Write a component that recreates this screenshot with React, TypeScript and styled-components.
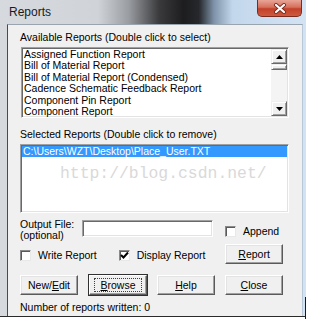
import styled, { createGlobalStyle } from "styled-components";

const Global = createGlobalStyle`
    body {
        margin: 0;
        background: #ffffff;
    }
`

const available = [
    "Assigned Function Report",
    "Bill of Material Report",
    "Bill of Material Report (Condensed)",
    "Cadence Schematic Feedback Report",
    "Component Pin Report",
    "Component Report",
]

const App = () => {
    return (
        <Page>
            <Global />
            <Frame>
                <TitleBar>
                    <Title>Reports</Title>
                    <CloseBox>
                        <svg width="14" height="11" viewBox="0 0 14 11">
                            <path d="M3 2 L11 9 M11 2 L3 9" stroke="#7a2a20" strokeWidth="4" strokeLinecap="round" />
                            <path d="M3 2 L11 9 M11 2 L3 9" stroke="#ffffff" strokeWidth="2.2" strokeLinecap="round" />
                        </svg>
                    </CloseBox>
                </TitleBar>
                <Client>
                    <Label>Available Reports (Double click to select)</Label>
                    <ListBox $height={71} $left={1}>
                        <Items>
                            {available.map((name) => (
                                <Item key={name}>{name}</Item>
                            ))}
                        </Items>
                        <ScrollBar>
                            <ArrowBtn>
                                <svg width="7" height="4" viewBox="0 0 7 4"><path d="M3.5 0 L7 4 L0 4 Z" fill="#000" /></svg>
                            </ArrowBtn>
                            <Thumb />
                            <Track />
                            <ArrowBtn>
                                <svg width="7" height="4" viewBox="0 0 7 4"><path d="M0 0 L7 0 L3.5 4 Z" fill="#000" /></svg>
                            </ArrowBtn>
                        </ScrollBar>
                    </ListBox>
                    <Label $top={10}>Selected Reports (Double click to remove)</Label>
                    <ListBox $height={69}>
                        <Items>
                            <Item $selected>C:\Users\WZT\Desktop\Place_User.TXT</Item>
                        </Items>
                        <Watermark>http://blog.csdn.net/</Watermark>
                    </ListBox>
                    <OutputRow>
                        <OutputLabel>Output File:<br />(optional)</OutputLabel>
                        <TextInput />
                        <Check $left={12}>
                            <Box />
                            <span>Append</span>
                        </Check>
                    </OutputRow>
                    <OptionsRow>
                        <Check $width={99}>
                            <Box />
                            <span>Write Report</span>
                        </Check>
                        <Check $width={107}>
                            <Box>
                                <svg width="9" height="9" viewBox="0 0 9 9">
                                    <path d="M1 4 L3.5 6.5 L8 1.5" stroke="#000" strokeWidth="2" fill="none" />
                                </svg>
                            </Box>
                            <span>Display Report</span>
                        </Check>
                        <Button><u>R</u>eport</Button>
                    </OptionsRow>
                    <ButtonRow>
                        <Button>New/<u>E</u>dit</Button>
                        <Button $default><Focus><u>B</u>rowse</Focus></Button>
                        <Button><u>H</u>elp</Button>
                        <Button><u>C</u>lose</Button>
                    </ButtonRow>
                    <Status>Number of reports written: 0</Status>
                </Client>
            </Frame>
            <Cursor />
        </Page>
    )
}

const Page = styled.div`
    position: relative;
    width: 310px;
    height: 323px;
    overflow: hidden;
    font-family: "Liberation Sans", Arial, sans-serif;
    font-size: 10.5px;
    color: #000;
`

const Frame = styled.div`
    width: 306px;
    height: 316px;
    display: flex;
    flex-direction: column;
    background: linear-gradient(90deg, #d6dade 0%, #d0d4d9 32%, #9a9da2 42%, #3a3a3c 52%, #1d1d1f 60%, #26282c 65%, #7f94aa 70%, #c3d7ec 76%, #d3e3f4 100%);
    border-bottom: 1px solid #2a2a2a;
`

const TitleBar = styled.div`
    height: 24px;
    display: flex;
    align-items: flex-start;
    justify-content: space-between;
    padding-left: 9px;
    padding-right: 4px;
`

const Title = styled.div`
    font-family: "Liberation Sans", Arial, sans-serif;
    font-size: 12px;
    line-height: 24px;
    color: #1a1a1a;
`

const CloseBox = styled.div`
    width: 45px;
    height: 17px;
    display: flex;
    align-items: center;
    justify-content: center;
    box-sizing: border-box;
    border: 1px solid #7c2a1e;
    border-top: none;
    border-radius: 0 0 5px 5px;
    background: linear-gradient(180deg, #e9a597 0%, #d7705c 45%, #c2402a 55%, #cf5a40 100%);
`

const Client = styled.div`
    flex: 1;
    margin-left: 7px;
    margin-right: 3px;
    box-sizing: border-box;
    background: #f0f0f0;
    border-left: 1px solid #4a4a4a;
    border-top: 1px solid #9aa4ae;
    border-right: 1px solid #b8c8d8;
    padding: 6px 13px 0 12px;
    display: flex;
    flex-direction: column;
`

const Label = styled.div<{ $top?: number }>`
    line-height: 12px;
    margin-top: ${(p) => p.$top ?? 0}px;
    margin-bottom: 4px;
    white-space: nowrap;
`

const ListBox = styled.div<{ $height: number; $left?: number }>`
    position: relative;
    height: ${(p) => p.$height}px;
    margin-left: ${(p) => p.$left ?? 0}px;
    box-sizing: border-box;
    background: #fff;
    border-top: 1px solid #a0a0a0;
    border-left: 1px solid #a0a0a0;
    border-right: 1px solid #ffffff;
    border-bottom: 1px solid #ffffff;
    box-shadow: inset 1px 1px 0 #696969, inset -1px -1px 0 #e3e3e3;
    padding: 1px;
    display: flex;
    overflow: hidden;
`

const Items = styled.div`
    flex: 1;
    display: flex;
    flex-direction: column;
`

const Item = styled.div<{ $selected?: boolean }>`
    height: 11.4px;
    line-height: 11.4px;
    padding-left: 1px;
    white-space: nowrap;
    background: ${(p) => (p.$selected ? "#3399ff" : "transparent")};
    color: ${(p) => (p.$selected ? "#fff" : "#000")};
`

const ScrollBar = styled.div`
    width: 16px;
    display: flex;
    flex-direction: column;
    background: #f4f4f4;
`

const Raised = styled.div`
    box-sizing: border-box;
    background: #f0f0f0;
    border-top: 1px solid #f0f0f0;
    border-left: 1px solid #f0f0f0;
    border-right: 1px solid #696969;
    border-bottom: 1px solid #696969;
    box-shadow: inset 1px 1px 0 #ffffff, inset -1px -1px 0 #a0a0a0;
`

const ArrowBtn = styled(Raised)`
    height: 15px;
    display: flex;
    align-items: center;
    justify-content: center;
`

const Thumb = styled(Raised)`
    height: 6px;
`

const Track = styled.div`
    flex: 1;
`

const Watermark = styled.div`
    position: absolute;
    left: 39px;
    top: 19px;
    font-family: "Liberation Mono", "Courier New", monospace;
    font-size: 16.4px;
    color: #d9d9d9;
    white-space: nowrap;
`

const OutputRow = styled.div`
    display: flex;
    align-items: flex-start;
    margin-top: 6px;
    height: 24px;
`

const OutputLabel = styled.div`
    width: 62px;
    line-height: 11px;
`

const TextInput = styled.div`
    width: 131px;
    height: 17px;
    margin-top: 1px;
    box-sizing: border-box;
    background: #fff;
    border-top: 1px solid #a0a0a0;
    border-left: 1px solid #a0a0a0;
    border-right: 1px solid #ffffff;
    border-bottom: 1px solid #ffffff;
    box-shadow: inset 1px 1px 0 #696969, inset -1px -1px 0 #e3e3e3;
`

const Check = styled.div<{ $width?: number; $left?: number }>`
    display: flex;
    align-items: center;
    gap: 7px;
    width: ${(p) => (p.$width ? `${p.$width}px` : "auto")};
    margin-left: ${(p) => p.$left ?? 0}px;
    margin-top: 6px;
    white-space: nowrap;
`

const Box = styled.div`
    width: 11px;
    height: 11px;
    box-sizing: border-box;
    background: #fff;
    border-top: 1px solid #8a8a8a;
    border-left: 1px solid #8a8a8a;
    border-right: 1px solid #e8e8e8;
    border-bottom: 1px solid #e8e8e8;
    box-shadow: inset 1px 1px 0 #5a5a5a;
    display: flex;
    align-items: center;
    justify-content: center;
`

const OptionsRow = styled.div`
    display: flex;
    align-items: flex-start;
    margin-top: 1px;
    height: 31px;

    & > div:nth-child(1),
    & > div:nth-child(2) {
        margin-top: 5px;
    }
    & > button {
        margin-left: auto;
        margin-right: 6px;
    }
`

const Button = styled.button<{ $default?: boolean }>`
    width: 58px;
    height: 20px;
    padding: 0;
    box-sizing: border-box;
    font-family: "Liberation Sans", Arial, sans-serif;
    font-size: 10.5px;
    color: #000;
    background: #f0f0f0;
    border-top: 1px solid #ffffff;
    border-left: 1px solid #ffffff;
    border-right: 1px solid #5a5a5a;
    border-bottom: 1px solid #5a5a5a;
    box-shadow: ${(p) =>
        p.$default
            ? "0 0 0 1px #303030, inset -1px -1px 0 #a0a0a0"
            : "inset -1px -1px 0 #a0a0a0, inset 1px 1px 0 #e3e3e3"};
    display: flex;
    align-items: center;
    justify-content: center;
`

const Focus = styled.span`
    display: flex;
    align-items: center;
    justify-content: center;
    width: 46px;
    height: 12px;
    outline: 1px dotted #404040;
`

const ButtonRow = styled.div`
    display: grid;
    grid-template-columns: 59px 58px 58px 58px;
    column-gap: 10px;
    height: 20px;
`

const Status = styled.div`
    margin-top: 6px;
    line-height: 12px;
`

const Cursor = styled.div`
    position: absolute;
    left: 305px;
    top: 297px;
    width: 1px;
    height: 22px;
    background: #1a1a1a;
`

export default App;
